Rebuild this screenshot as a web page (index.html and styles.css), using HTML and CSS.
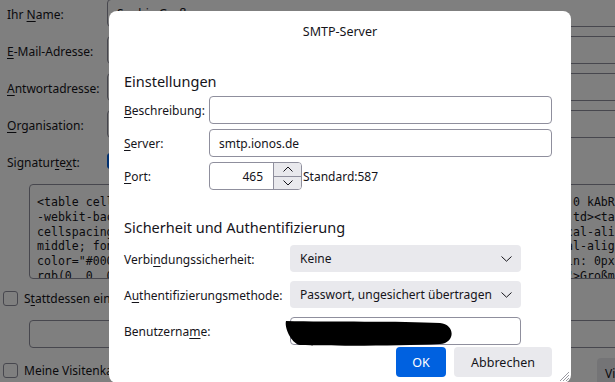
FILE: index.html
```html
<!DOCTYPE html>
<html lang="de">
<head>
<meta charset="utf-8">
<title>SMTP-Server</title>
<link rel="stylesheet" href="styles.css">
</head>
<body>
<div class="page">
  <div class="rows">
    <span class="lbl">Ihr <u>N</u>ame:</span><div class="bg-input">Sophie Großmann</div>
    <span class="lbl"><u>E</u>-Mail-Adresse:</span><div class="bg-input">sophie@grossmann.de</div>
    <span class="lbl"><u>A</u>ntwortadresse:</span><div class="bg-input"></div>
    <span class="lbl"><u>O</u>rganisation:</span><div class="bg-input">Großmann GmbH</div>
    <span class="lbl">Signatur<u>t</u>e<u>x</u>t:</span><div class="check-row"><span class="box checked"></span><span>Als HTML verwenden</span></div>
  </div>
  <div class="sig">&lt;table cellpadding="0" cellspacing="0" style="font-family: Arial; font-size: 0 kAbRZ 1px;
-webkit-background-clip: padding-box; border-collapse: collapse; width: 100%;td&gt;&lt;table
cellspacing="0" cellpadding="0"&gt;&lt;tbody&gt;&lt;tr&gt;&lt;td style="padding: 0 10px; vertical-align: middle;
middle; font-size: 12px; font-family: Arial;"&gt;&lt;span style="margin: 0; vertical-align: top;
color="#000000" style="font-size: 12px; line-height: 16px; color: #000; margin: 0px; padding: 0px;
rgb(0, 0, 0); font-family: Arial, sans-serif; font-size: 14px; margin: 10px;"&gt;Großmann GmbH</div>
  <div class="check-line"><span class="box"></span><span>S<u>t</u>attdessen eine Datei als Signatur anhängen (Text, HTML oder Grafik):</span></div>
  <div class="file-input"></div>
  <div class="last-row">
    <div class="check-line"><span class="box"></span><span>Meine Visitenkarte an Nachrichten anhängen</span></div>
    <span class="bg-button">Visitenkarte bearbeiten…</span>
  </div>
</div>

<div class="backdrop"></div>

<div class="dialog">
  <div class="dlg-title">SMTP-Server</div>

  <div class="section-head first">Einstellungen</div>
  <div class="grid-a">
    <span class="dlbl"><u>B</u>eschreibung:</span>
    <div class="inp"></div>
    <span class="dlbl"><u>S</u>erver:</span>
    <div class="inp">smtp.ionos.de</div>
    <span class="dlbl"><u>P</u>ort:</span>
    <div class="port-row">
      <div class="port">
        <span class="port-num">465</span>
        <span class="spin">
          <span class="spin-btn"><svg width="10" height="6" viewBox="0 0 10 6"><polyline points="0.5,5.5 5,1 9.5,5.5" fill="none" stroke="#15141a" stroke-width="1"/></svg></span>
          <span class="spin-btn"><svg width="10" height="6" viewBox="0 0 10 6"><polyline points="0.5,0.5 5,5 9.5,0.5" fill="none" stroke="#15141a" stroke-width="1"/></svg></span>
        </span>
      </div>
      <span>Standard:587</span>
    </div>
  </div>

  <div class="section-head second">Sicherheit und Authentifizierung</div>
  <div class="grid-b">
    <span class="dlbl">Verbi<u>n</u>dungssicherheit:</span>
    <div class="sel"><span>Keine</span><svg width="11" height="6" viewBox="0 0 11 6"><polyline points="0.5,0.5 5.5,5.2 10.5,0.5" fill="none" stroke="#15141a" stroke-width="1"/></svg></div>
    <span class="dlbl">A<u>u</u>thentifizierungsmethode:</span>
    <div class="sel"><span>Passwort, ungesichert übertragen</span><svg width="11" height="6" viewBox="0 0 11 6"><polyline points="0.5,0.5 5.5,5.2 10.5,0.5" fill="none" stroke="#15141a" stroke-width="1"/></svg></div>
    <span class="dlbl">Benutzerna<u>m</u>e:</span>
    <div class="inp user">
      <svg class="scribble" width="172" height="30" viewBox="0 0 172 30"><path d="M1,3 C45,4 115,3 155,5 C170,6 171,25 155,26 C115,28 45,28 15,27 C7,26 -1,10 1,3 Z" fill="#000"/></svg>
    </div>
  </div>

  <div class="buttons">
    <span class="btn primary">OK</span>
    <span class="btn">Abbrechen</span>
  </div>

  <svg class="grip" width="12" height="12" viewBox="0 0 12 12"><path d="M11,2 L2,11 M11,5 L5,11 M11,8 L8,11" stroke="#9a9aa2" stroke-width="1" fill="none"/></svg>
</div>
</body>
</html>
```

FILE: styles.css
```css
* { box-sizing: border-box; }
html, body { margin: 0; padding: 0; }
body {
  width: 615px;
  height: 382px;
  overflow: hidden;
  position: relative;
  background: #ffffff;
  color: #15141a;
  font-family: "Noto Sans", "Open Sans", sans-serif;
  font-size: 12px;
}
u { text-decoration: underline; text-underline-offset: 2px; }

/* background page */
.page {
  width: 720px;
  padding-top: 0;
  display: flex;
  flex-direction: column;
  transform: translateY(-1px);
}
.rows {
  display: grid;
  grid-template-columns: 107px 1fr;
  grid-auto-rows: 28px;
  row-gap: 9px;
  align-items: center;
}
.lbl { padding-left: 7px; padding-top: 2px; white-space: nowrap; }
.bg-input {
  height: 28px;
  border: 1px solid #8f8f9d;
  border-radius: 4px;
  padding: 0 9px;
  display: flex;
  align-items: center;
}
.check-row { display: flex; align-items: center; gap: 6px; }
.box {
  width: 15px;
  height: 15px;
  border: 1px solid #8f8f9d;
  border-radius: 3px;
  background: #fff;
  flex: none;
}
.box.checked { background: #0061e0; border-color: #0061e0; width: 16px; height: 16px; }
.sig {
  margin: 9px 0 0 29px;
  height: 95px;
  border: 1px solid #8f8f9d;
  border-radius: 4px;
  padding: 10px 7px 0;
  font-family: "DejaVu Sans Mono", "Liberation Mono", monospace;
  font-size: 11.57px;
  line-height: 14.8px;
  white-space: pre;
  overflow: hidden;
}
.check-line {
  display: flex;
  align-items: center;
  gap: 6px;
  padding-left: 3px;
  height: 28px;
  white-space: nowrap;
}
.sig + .check-line { margin-top: 5px; }
.file-input {
  margin: 8px 0 0 29px;
  height: 28px;
  border: 1px solid #8f8f9d;
  border-radius: 4px;
}
.last-row {
  margin-top: 8px;
  display: grid;
  grid-template-columns: 597px auto;
  align-items: start;
}
.bg-button {
  margin-top: 2px;
  height: 30px;
  padding: 0 8px;
  display: flex;
  align-items: center;
  background: #e9e9ed;
  border-radius: 4px;
  white-space: nowrap;
}

.backdrop {
  position: fixed;
  inset: 0;
  background: rgba(0, 0, 0, 0.5);
}

/* dialog */
.dialog {
  position: absolute;
  left: 109px;
  top: 11px;
  width: 462px;
  height: 372px;
  background: #ffffff;
  border-radius: 8px;
  padding: 13px 19px 0 15px;
  display: flex;
  flex-direction: column;
}
.dlg-title {
  margin: 0 -19px 0 -15px;
  text-align: center;
  line-height: 16px;
  font-size: 12.5px;
}
.section-head {
  font-size: 14.5px;
  line-height: 20px;
}
.section-head.first { margin-top: 31px; }
.section-head.second { margin-top: 27px; }
.grid-a {
  margin-top: 5px;
  display: grid;
  grid-template-columns: 85px 343px;
  grid-auto-rows: 28px;
  row-gap: 5px;
  align-items: center;
}
.grid-b {
  margin-top: 8px;
  display: grid;
  grid-template-columns: 166px 231px;
  grid-template-rows: 27px 27px 28px;
  row-gap: 9px;
  align-items: center;
}
.dlbl { white-space: nowrap; padding-top: 1px; }
.inp {
  height: 28px;
  border: 1px solid #8f8f9d;
  border-radius: 4px;
  padding: 0 9px;
  display: flex;
  align-items: center;
  background: #fff;
}
.inp.user { position: relative; }
.scribble { position: absolute; left: -6px; top: 0px; }
.port-row { display: flex; align-items: center; gap: 1px; height: 28px; }
.port {
  width: 93px;
  height: 28px;
  border: 1px solid #8f8f9d;
  border-radius: 4px;
  display: flex;
  overflow: hidden;
}
.port-num {
  flex: 1;
  text-align: right;
  padding-right: 10px;
  display: flex;
  align-items: center;
  justify-content: flex-end;
}
.spin {
  width: 28px;
  display: flex;
  flex-direction: column;
  border-left: 1px solid #8f8f9d;
}
.spin-btn {
  flex: 1;
  background: #e9e9ed;
  display: flex;
  align-items: center;
  justify-content: center;
}
.spin-btn + .spin-btn { border-top: 1px solid #8f8f9d; }
.sel {
  height: 27px;
  background: #e9e9ed;
  border-radius: 4px;
  padding: 0 9px 0 10px;
  display: flex;
  align-items: center;
  justify-content: space-between;
  white-space: nowrap;
}
.buttons {
  margin-top: 2px;
  display: flex;
  justify-content: flex-end;
  gap: 8px;
}
.btn {
  height: 30px;
  width: 98px;
  border-radius: 4px;
  background: #e9e9ed;
  display: flex;
  align-items: center;
  justify-content: center;
  font-size: 12.5px;
}
.btn.primary {
  width: 50px;
  background: #0061e0;
  color: #ffffff;
}
.grip { position: absolute; right: 1px; bottom: 1px; }
```
